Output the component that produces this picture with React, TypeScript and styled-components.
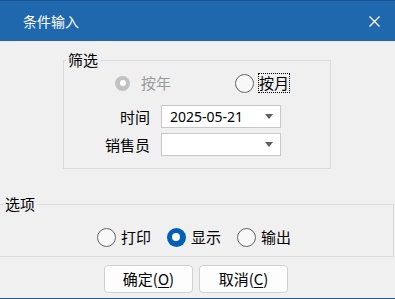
import React from 'react';
import styled, { createGlobalStyle } from 'styled-components';

const GlobalStyle = createGlobalStyle`
  html, body {
    margin: 0;
    padding: 0;
    background: #f0f0f0;
  }
  body {
    font-family: "Noto Sans CJK SC", "Noto Sans", sans-serif;
    color: #000;
  }
`;

const Window = styled.div`
  width: 395px;
  height: 299px;
  box-sizing: border-box;
  display: flex;
  flex-direction: column;
  background: #f0f0f0;
  border-bottom: 1px solid #1c5c9e;
  overflow: hidden;
`;

const TitleBar = styled.div`
  height: 41px;
  flex: none;
  box-sizing: border-box;
  display: flex;
  align-items: center;
  justify-content: space-between;
  padding: 0 15px 0 23px;
  background: #2068ae;
  border-top: 1px solid #17548f;
  color: #fff;
  font-size: 14px;
  line-height: 18px;
`;

const CloseButton = styled.span`
  display: flex;
  width: 11px;
  height: 11px;
`;

const Body = styled.div`
  flex: 1;
  display: flex;
  flex-direction: column;
  padding-top: 10px;
  font-size: 15px;
`;

const GroupBox = styled.fieldset<{ $left: number; $width: number }>`
  margin: 0 0 0 ${(p) => p.$left}px;
  width: ${(p) => p.$width}px;
  box-sizing: border-box;
  padding: 0;
  min-width: 0;
  border: 1px solid #dcdcdc;
`;

const Legend = styled.legend<{ $offset: number }>`
  margin-left: ${(p) => p.$offset}px;
  padding: 0 2px;
  font-size: 15px;
  line-height: 18px;
`;

const FilterRadios = styled.div`
  display: grid;
  grid-template-columns: 122px auto;
  margin: 4px 0 0 49px;
  height: 20px;
  align-items: center;
`;

const RadioItem = styled.label`
  display: inline-flex;
  align-items: center;
  gap: 4px;
  height: 20px;
  line-height: 18px;
`;

const RadioBox = styled.span`
  width: 19px;
  height: 19px;
  display: flex;
  align-items: center;
  justify-content: center;
`;

const Circle = styled.span<{ $checked?: boolean; $disabled?: boolean }>`
  box-sizing: border-box;
  border-radius: 50%;
  width: ${(p) => (p.$disabled ? 15 : 19)}px;
  height: ${(p) => (p.$disabled ? 15 : 19)}px;
  display: flex;
  align-items: center;
  justify-content: center;
  background: ${(p) =>
    p.$disabled ? '#c2c2c2' : p.$checked ? '#005fb8' : '#f8f8f8'};
  border: ${(p) =>
    p.$disabled || p.$checked ? 'none' : '1px solid #646464'};
  &::after {
    content: '';
    display: ${(p) => (p.$checked ? 'block' : 'none')};
    width: ${(p) => (p.$disabled ? 6 : 8)}px;
    height: ${(p) => (p.$disabled ? 6 : 8)}px;
    border-radius: 50%;
    background: #fff;
  }
`;

const RadioText = styled.span<{ $disabled?: boolean; $focused?: boolean }>`
  border: 1px dotted ${(p) => (p.$focused ? '#000' : 'transparent')};
  padding: 0;
  color: ${(p) => (p.$disabled ? '#9a9a9a' : '#000')};
  margin-left: ${(p) => (p.$disabled ? 4 : 0)}px;
`;

const FieldRow = styled.div<{ $top: number }>`
  display: grid;
  grid-template-columns: 86px 120px;
  column-gap: 11px;
  align-items: center;
  margin-top: ${(p) => p.$top}px;
`;

const FieldLabel = styled.span`
  text-align: right;
  line-height: 18px;
`;

const Combo = styled.div`
  height: 23px;
  box-sizing: border-box;
  background: #fff;
  border: 1px solid #c8c8c8;
  display: flex;
  align-items: center;
  justify-content: space-between;
  padding: 0 7px 0 8px;
  font-family: "Noto Sans", sans-serif;
  font-size: 14px;
`;

const Arrow = styled.span`
  width: 0;
  height: 0;
  border-left: 4px solid transparent;
  border-right: 4px solid transparent;
  border-top: 5px solid #5a635f;
`;

const FilterBottom = styled.div`
  height: 12px;
`;

const OptionsWrap = styled.div`
  margin-top: 26px;
`;

const OptionRadios = styled.div`
  display: flex;
  justify-content: center;
  gap: 15px;
  margin-top: 14px;
  padding-right: 4px;
  height: 20px;
  margin-bottom: 9px;
`;

const ButtonRow = styled.div`
  display: flex;
  justify-content: center;
  gap: 6px;
  margin-top: 8px;
  padding-right: 3px;
`;

const Button = styled.button`
  width: 89px;
  height: 28px;
  box-sizing: border-box;
  background: #fdfdfd;
  border: 1px solid #d0d0d0;
  border-radius: 4px;
  font-family: "Noto Sans CJK SC", "Noto Sans", sans-serif;
  font-size: 15px;
  line-height: 18px;
  color: #000;
  padding: 0;
  u {
    text-decoration: underline;
    text-underline-offset: 2px;
  }
`;

type RadioProps = {
  label: string;
  checked?: boolean;
  disabled?: boolean;
  focused?: boolean;
};

const Radio = ({ label, checked, disabled, focused }: RadioProps) => (
  <RadioItem>
    <RadioBox>
      <Circle $checked={checked} $disabled={disabled} />
    </RadioBox>
    <RadioText $disabled={disabled} $focused={focused}>
      {label}
    </RadioText>
  </RadioItem>
);

export default function App() {
  return (
    <>
      <GlobalStyle />
      <Window>
        <TitleBar>
          <span>条件输入</span>
          <CloseButton>
            <svg width="11" height="11" viewBox="0 0 11 11">
              <path d="M0.5 0.5 L10.5 10.5 M10.5 0.5 L0.5 10.5" stroke="#fff" strokeWidth="1.3" />
            </svg>
          </CloseButton>
        </TitleBar>
        <Body>
          <GroupBox $left={63} $width={268}>
            <Legend $offset={2}>筛选</Legend>
            <FilterRadios>
              <Radio label="按年" checked disabled />
              <Radio label="按月" focused />
            </FilterRadios>
            <FieldRow $top={12}>
              <FieldLabel>时间</FieldLabel>
              <Combo>
                <span>2025-05-21</span>
                <Arrow />
              </Combo>
            </FieldRow>
            <FieldRow $top={5}>
              <FieldLabel>销售员</FieldLabel>
              <Combo>
                <span />
                <Arrow />
              </Combo>
            </FieldRow>
            <FilterBottom />
          </GroupBox>
          <OptionsWrap>
            <GroupBox $left={-1} $width={395}>
              <Legend $offset={3}>选项</Legend>
              <OptionRadios>
                <Radio label="打印" />
                <Radio label="显示" checked />
                <Radio label="输出" />
              </OptionRadios>
            </GroupBox>
          </OptionsWrap>
          <ButtonRow>
            <Button>
              确定(<u>O</u>)
            </Button>
            <Button>
              取消(<u>C</u>)
            </Button>
          </ButtonRow>
        </Body>
      </Window>
    </>
  );
}
